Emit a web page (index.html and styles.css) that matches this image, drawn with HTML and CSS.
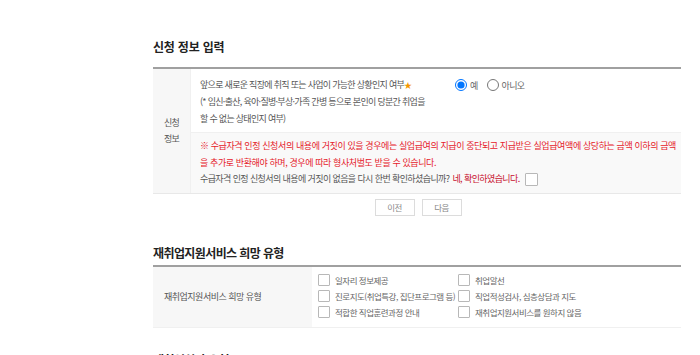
FILE: index.html
```html
<!DOCTYPE html>
<html lang="ko">
  <head>
    <meta charset="UTF-8" />
    <title>신청 정보 입력</title>
    <link rel="stylesheet" href="styles.css">
  </head>
  <body>
    <div class="container">
      <h2 class="sec-title first">신청 정보 입력</h2>

      <div class="info-table">
        <div class="label">신청<br>정보</div>
        <div class="question">
          앞으로 새로운 직장에 취직 또는 사업이 가능한 상황인지 여부<span class="star">★</span><br>
          (* 임신·출산, 육아·질병·부상·가족 간병 등으로 본인이 당분간 취업을<br>
          할 수 없는 상태인지 여부)
        </div>
        <div class="answer">
          <label class="radio"><input type="radio" name="able" checked> 예</label>
          <label class="radio"><input type="radio" name="able"> 아니오</label>
        </div>
        <div class="notice">
          <p class="warn">※ 수급자격 인정 신청서의 내용에 거짓이 있을 경우에는 실업급여의 지급이 중단되고 지급받은 실업급여액에 상당하는 금액 이하의 금액<br>을 추가로 반환해야 하며, 경우에 따라 형사처벌도 받을 수 있습니다.</p>
          <p class="confirm">
            수급자격 인정 신청서의 내용에 거짓이 없음을 다시 한번 확인하셨습니까?
            <span class="yes">네, 확인하였습니다.</span>
            <span class="chk big"></span>
          </p>
        </div>
      </div>

      <div class="btn-row">
        <button class="page-btn">이전</button>
        <button class="page-btn">다음</button>
      </div>

      <h2 class="sec-title second">재취업지원서비스 희망 유형</h2>

      <div class="hope-table">
        <div class="hope-label">재취업지원서비스 희망 유형</div>
        <div class="options">
          <label class="opt"><span class="chk"></span>일자리 정보제공</label>
          <label class="opt"><span class="chk"></span>취업알선</label>
          <label class="opt"><span class="chk"></span>진로지도(취업특강, 집단프로그램 등)</label>
          <label class="opt"><span class="chk"></span>직업적성검사, 심층상담과 지도</label>
          <label class="opt"><span class="chk"></span>적합한 직업훈련과정 안내</label>
          <label class="opt"><span class="chk"></span>재취업지원서비스를 원하지 않음</label>
        </div>
      </div>

      <h2 class="sec-title third">재취업희망 유형</h2>
    </div>
  </body>
</html>
```

FILE: styles.css
```css
* {
  margin: 0;
  padding: 0;
  box-sizing: border-box;
}

body {
  font-family: "Noto Sans CJK KR", "Noto Sans", sans-serif;
  background: #fff;
  color: #555;
  overflow: hidden;
}

.container {
  margin-left: 153px;
  width: 528px;
}

.sec-title {
  font-size: 12px;
  font-weight: bold;
  color: #222;
  line-height: 16px;
  letter-spacing: -0.6px;
}

.sec-title.first {
  margin-top: 39px;
  margin-bottom: 12px;
  letter-spacing: -0.2px;
}

.sec-title.second {
  margin-top: 29px;
  margin-bottom: 4px;
}

.sec-title.third {
  margin-top: 24px;
}

/* 신청 정보 */
.info-table {
  display: grid;
  grid-template-columns: 38px 258px 1fr;
  border-top: 2px solid #a0a0a0;
  border-bottom: 1px solid #e8e8e8;
  font-size: 9px;
  letter-spacing: -0.7px;
}

.label {
  grid-row: 1 / 3;
  display: flex;
  align-items: center;
  justify-content: center;
  text-align: center;
  line-height: 16px;
  background: #f7f7f7;
  border-right: 1px solid #f0f0f0;
}

.question {
  padding: 7px 9px 5px;
  line-height: 17px;
  border-bottom: 1px solid #f0f0f0;
}

.star {
  color: #f39800;
  font-size: 8px;
}

.answer {
  padding: 9px 10px 0 6px;
  display: flex;
  gap: 9px;
  border-bottom: 1px solid #f0f0f0;
}

.radio {
  display: flex;
  align-items: center;
  height: 14px;
  color: #666;
}

.radio input {
  width: 12px;
  height: 12px;
  margin: 0 3px 0 0;
}

.notice {
  grid-column: 2 / 4;
  background: #f9f9f9;
  padding: 5px 0 5px 9px;
  line-height: 16.5px;
  letter-spacing: -0.4px;
}

.warn {
  color: #e5202a;
}

.confirm {
  display: flex;
  align-items: center;
  gap: 3px;
  letter-spacing: -0.6px;
}

.yes {
  color: #c8102e;
}

.chk {
  display: inline-block;
  width: 12px;
  height: 12px;
  border: 1px solid #b8b8b8;
  border-radius: 1px;
  background: #fff;
  flex-shrink: 0;
}

.chk.big {
  width: 13px;
  height: 13px;
  margin-left: 2px;
}

.btn-row {
  display: flex;
  justify-content: center;
  gap: 7px;
  margin-top: 5px;
  padding-left: 2px;
}

.page-btn {
  width: 40px;
  height: 17px;
  border: 1px solid #dcdcdc;
  background: #fff;
  color: #888;
  font-family: inherit;
  font-size: 8.5px;
  letter-spacing: -0.5px;
}

/* 재취업지원서비스 희망 유형 */
.hope-table {
  display: flex;
  border-top: 2px solid #a0a0a0;
  border-bottom: 1px solid #f0f0f0;
  font-size: 8.5px;
  letter-spacing: -0.5px;
}

.hope-label {
  width: 159px;
  background: #f7f7f7;
  display: flex;
  align-items: center;
  padding-left: 11px;
  color: #555;
  font-size: 9px;
  letter-spacing: -0.5px;
}

.options {
  flex: 1;
  display: grid;
  grid-template-columns: 140px 1fr;
  padding: 5px 0 7px 6px;
}

.opt {
  display: flex;
  align-items: center;
  gap: 5px;
  height: 16px;
  color: #666;
  white-space: nowrap;
}
```
